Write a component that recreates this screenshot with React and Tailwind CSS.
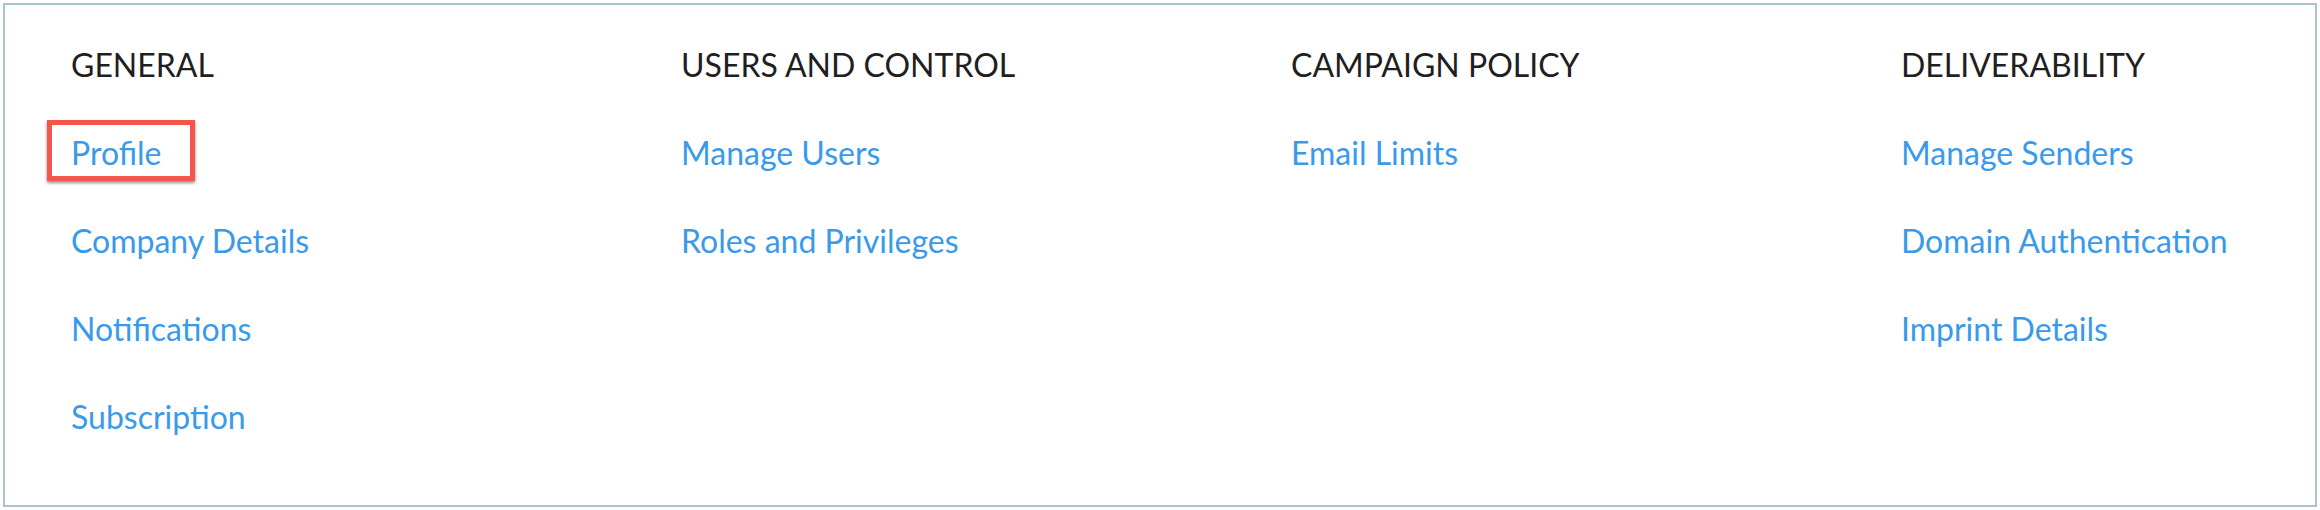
import React from 'react';

const sections = [
  { title: 'GENERAL', links: ['Profile', 'Company Details', 'Notifications', 'Subscription'] },
  { title: 'USERS AND CONTROL', links: ['Manage Users', 'Roles and Privileges'] },
  { title: 'CAMPAIGN POLICY', links: ['Email Limits'] },
  { title: 'DELIVERABILITY', links: ['Manage Senders', 'Domain Authentication', 'Imprint Details'] },
];

export default function App() {
  return (
    <div className="w-[2320px] h-[510px] bg-white p-[3px] font-['Lato',sans-serif]">
      <div className="h-[504px] border-2 border-[#a8c4cf] bg-white flex pl-[66px] pt-[42px]">
        {sections.map((section, i) => (
          <div key={section.title} className={i === sections.length - 1 ? 'flex-1' : 'w-[610px] shrink-0'}>
            <h2 className="text-[32px] leading-[36px] text-[#1f1f1f] font-normal">{section.title}</h2>
            <ul className="mt-[52px] flex flex-col gap-[52px]">
              {section.links.map((link) => (
                <li key={link} className="text-[32px] leading-[36px]">
                  <a href="#" className="relative text-[#3a9aea]">
                    {link}
                    {link === 'Profile' && (
                      <span className="absolute left-[-24px] top-[-13px] w-[148px] h-[61px] border-[5px] border-[#f4564d] shadow-[0_2px_3px_rgba(0,0,0,0.45)]" />
                    )}
                  </a>
                </li>
              ))}
            </ul>
          </div>
        ))}
      </div>
    </div>
  );
}
